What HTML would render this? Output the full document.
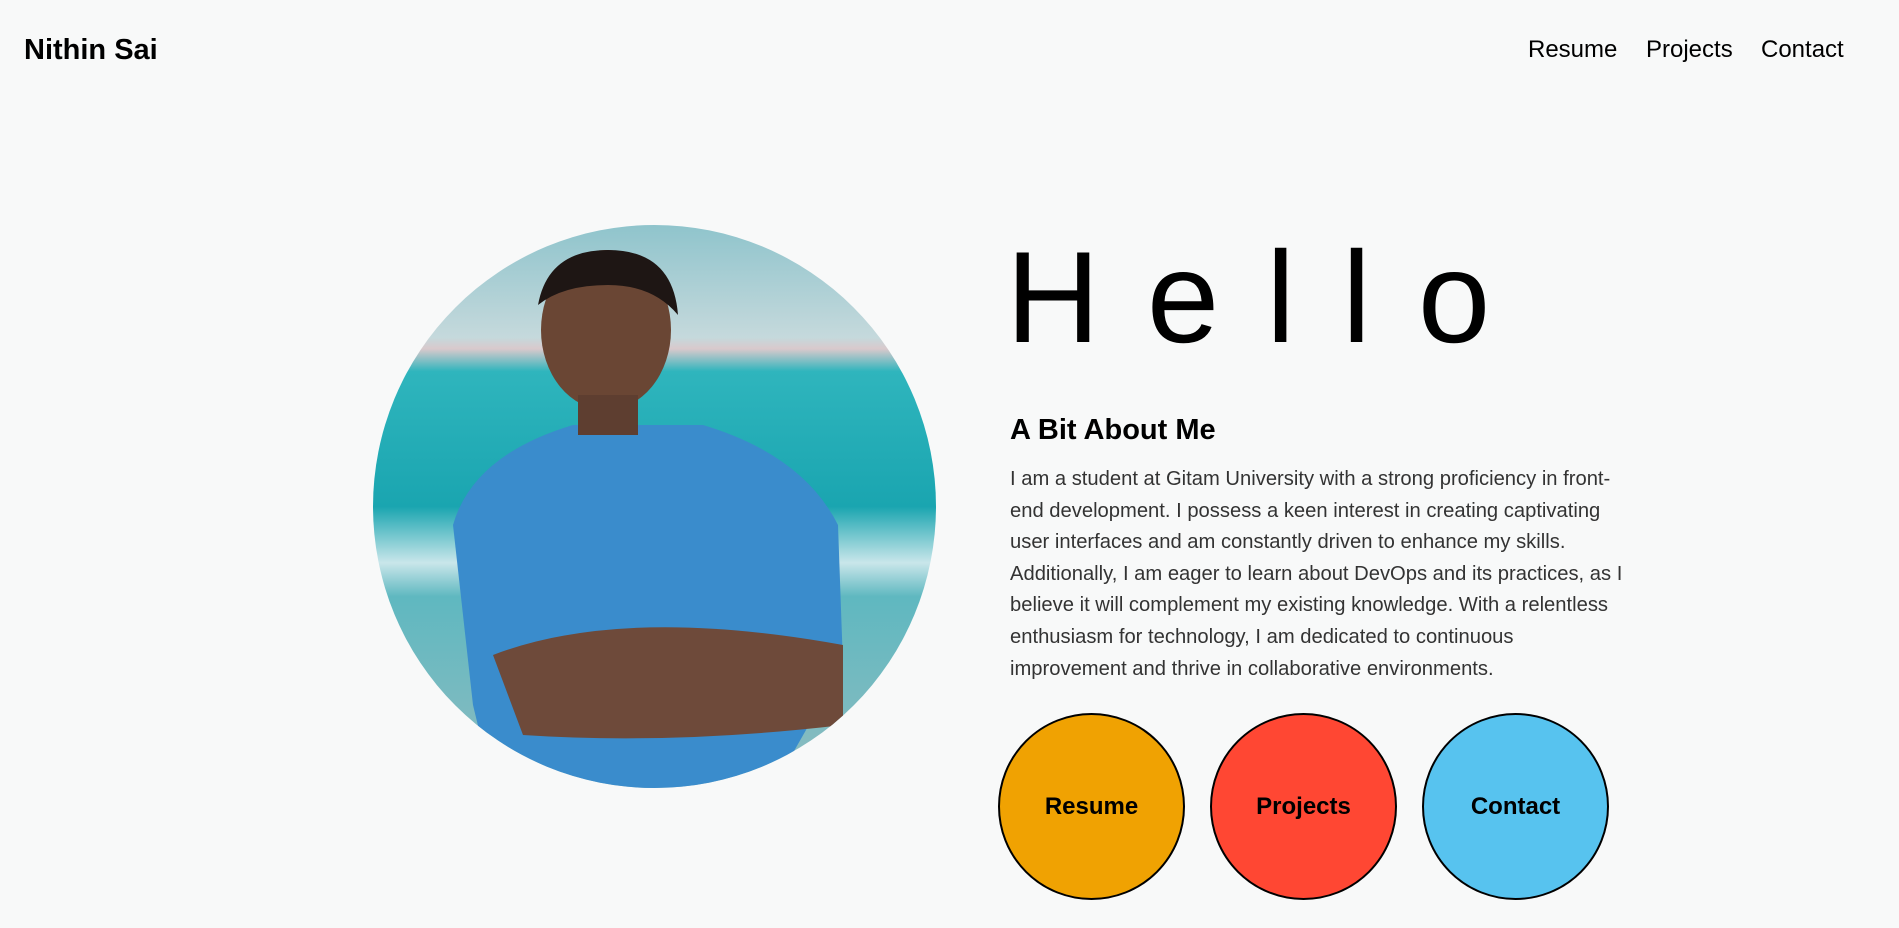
<!DOCTYPE html>
<html><head><meta charset="utf-8"><style>
*{margin:0;padding:0;box-sizing:border-box}
body{width:1899px;height:928px;background:#f8f9f9;font-family:"Liberation Sans",Arial,sans-serif;position:relative;overflow:hidden;color:#000}
.logo{position:absolute;left:24px;top:34px;font-size:29px;font-weight:bold}
.nav{position:absolute;top:36px;font-size:24px}
.photo{position:absolute;left:373px;top:225px;width:563px;height:563px;border-radius:50%;overflow:hidden}
.hello{position:absolute;left:1006px;top:222px;font-size:130px;letter-spacing:47px;line-height:150px}
h2{position:absolute;left:1010px;top:414px;font-size:29px;font-weight:bold}
p{position:absolute;left:1010px;top:464px;width:625px;font-size:20.2px;line-height:31.6px;color:#333}
.b{position:absolute;top:713px;width:187px;height:187px;border-radius:50%;border:2px solid #000;display:flex;align-items:center;justify-content:center;font-size:24px;font-weight:bold}
</style></head><body>
<div class="logo">Nithin Sai</div>
<div class="nav" style="left:1528px">Resume</div>
<div class="nav" style="left:1646px">Projects</div>
<div class="nav" style="left:1761px">Contact</div>
<div class="photo"><svg width="563" height="563" viewBox="0 0 563 563">
<defs><linearGradient id="g" x1="0" y1="0" x2="0" y2="1">
<stop offset="0" stop-color="#8fc4cc"/><stop offset="0.2" stop-color="#c5d9dc"/><stop offset="0.22" stop-color="#d9c9cc"/><stop offset="0.26" stop-color="#2fb5bd"/><stop offset="0.5" stop-color="#1aa5b0"/><stop offset="0.6" stop-color="#c9e6ea"/><stop offset="0.66" stop-color="#5fb8c0"/><stop offset="1" stop-color="#8fbcc0"/></linearGradient></defs>
<rect width="563" height="563" fill="url(#g)"/>
<path d="M80 300 Q100 230 200 200 L330 200 Q430 230 465 300 L470 440 L400 563 L120 563 L100 480 Z" fill="#3a8ccc"/>
<path d="M120 430 Q250 380 470 420 L470 500 Q300 520 150 510 Z" fill="#6e4a3a"/>
<ellipse cx="233" cy="105" rx="65" ry="80" fill="#6a4634"/>
<path d="M165 80 Q175 25 235 25 Q300 25 305 90 Q280 60 235 60 Q190 60 165 80Z" fill="#1e1614"/>
<rect x="205" y="170" width="60" height="40" fill="#5e3e30"/>
</svg></div>
<div class="hello">Hello</div>
<h2>A Bit About Me</h2>
<p>I am a student at Gitam University with a strong proficiency in front-end development. I possess a keen interest in creating captivating user interfaces and am constantly driven to enhance my skills. Additionally, I am eager to learn about DevOps and its practices, as I believe it will complement my existing knowledge. With a relentless enthusiasm for technology, I am dedicated to continuous improvement and thrive in collaborative environments.</p>
<div class="b" style="left:998px;background:#f0a202">Resume</div>
<div class="b" style="left:1210px;background:#ff4733">Projects</div>
<div class="b" style="left:1422px;background:#57c3ef">Contact</div>
</body></html>
